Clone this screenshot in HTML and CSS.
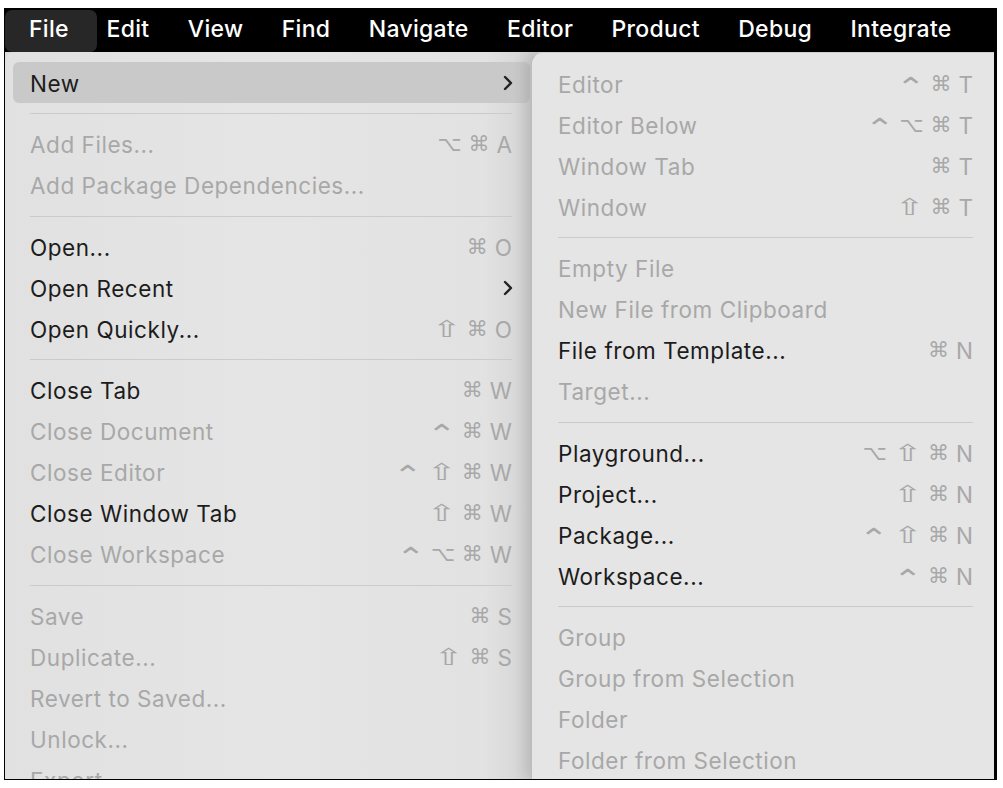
FILE: index.html
```html
<!DOCTYPE html>
<html lang="en">
<head>
<meta charset="utf-8">
<title>Xcode File menu</title>
<link rel="stylesheet" href="styles.css">
</head>
<body>
<div class="screen">
  <header class="menubar">
    <span class="mb-item active">File</span>
    <span class="mb-item">Edit</span>
    <span class="mb-item">View</span>
    <span class="mb-item">Find</span>
    <span class="mb-item">Navigate</span>
    <span class="mb-item">Editor</span>
    <span class="mb-item">Product</span>
    <span class="mb-item">Debug</span>
    <span class="mb-item">Integrate</span>
  </header>
  <div class="desk">
    <div class="menu main">
      <div class="item hl"><span class="label">New</span><svg class="chev" viewBox="0 0 10 16" width="10" height="16"><path d="M2 2 L8 8 L2 14" fill="none" stroke="currentColor" stroke-width="2.4" stroke-linecap="round" stroke-linejoin="round"/></svg></div>
      <div class="sep"></div>
      <div class="item dis"><span class="label">Add Files...</span><span class="kbd"><span class="m opt">⌥</span><span class="m">⌘</span><span class="k">A</span></span></div>
      <div class="item dis"><span class="label">Add Package Dependencies...</span></div>
      <div class="sep"></div>
      <div class="item"><span class="label">Open...</span><span class="kbd"><span class="m">⌘</span><span class="k">O</span></span></div>
      <div class="item"><span class="label">Open Recent</span><svg class="chev" viewBox="0 0 10 16" width="10" height="16"><path d="M2 2 L8 8 L2 14" fill="none" stroke="currentColor" stroke-width="2.4" stroke-linecap="round" stroke-linejoin="round"/></svg></div>
      <div class="item"><span class="label">Open Quickly...</span><span class="kbd"><span class="m sh">⇧</span><span class="m">⌘</span><span class="k">O</span></span></div>
      <div class="sep"></div>
      <div class="item"><span class="label">Close Tab</span><span class="kbd"><span class="m">⌘</span><span class="k">W</span></span></div>
      <div class="item dis"><span class="label">Close Document</span><span class="kbd"><span class="m ctl">⌃</span><span class="m">⌘</span><span class="k">W</span></span></div>
      <div class="item dis"><span class="label">Close Editor</span><span class="kbd"><span class="m ctl">⌃</span><span class="m sh">⇧</span><span class="m">⌘</span><span class="k">W</span></span></div>
      <div class="item"><span class="label">Close Window Tab</span><span class="kbd"><span class="m sh">⇧</span><span class="m">⌘</span><span class="k">W</span></span></div>
      <div class="item dis"><span class="label">Close Workspace</span><span class="kbd"><span class="m ctl">⌃</span><span class="m opt">⌥</span><span class="m">⌘</span><span class="k">W</span></span></div>
      <div class="sep"></div>
      <div class="item dis"><span class="label">Save</span><span class="kbd"><span class="m">⌘</span><span class="k">S</span></span></div>
      <div class="item dis"><span class="label">Duplicate...</span><span class="kbd"><span class="m sh">⇧</span><span class="m">⌘</span><span class="k">S</span></span></div>
      <div class="item dis"><span class="label">Revert to Saved...</span></div>
      <div class="item dis"><span class="label">Unlock...</span></div>
      <div class="item dis"><span class="label">Export...</span></div>
    </div>
    <div class="menu sub">
      <div class="item dis"><span class="label">Editor</span><span class="kbd"><span class="m ctl">⌃</span><span class="m">⌘</span><span class="k">T</span></span></div>
      <div class="item dis"><span class="label">Editor Below</span><span class="kbd"><span class="m ctl">⌃</span><span class="m opt">⌥</span><span class="m">⌘</span><span class="k">T</span></span></div>
      <div class="item dis"><span class="label">Window Tab</span><span class="kbd"><span class="m">⌘</span><span class="k">T</span></span></div>
      <div class="item dis"><span class="label">Window</span><span class="kbd"><span class="m sh">⇧</span><span class="m">⌘</span><span class="k">T</span></span></div>
      <div class="sep"></div>
      <div class="item dis"><span class="label">Empty File</span></div>
      <div class="item dis"><span class="label">New File from Clipboard</span></div>
      <div class="item"><span class="label">File from Template...</span><span class="kbd"><span class="m">⌘</span><span class="k">N</span></span></div>
      <div class="item dis"><span class="label">Target...</span></div>
      <div class="sep"></div>
      <div class="item"><span class="label">Playground...</span><span class="kbd"><span class="m opt">⌥</span><span class="m sh">⇧</span><span class="m">⌘</span><span class="k">N</span></span></div>
      <div class="item"><span class="label">Project...</span><span class="kbd"><span class="m sh">⇧</span><span class="m">⌘</span><span class="k">N</span></span></div>
      <div class="item"><span class="label">Package...</span><span class="kbd"><span class="m ctl">⌃</span><span class="m sh">⇧</span><span class="m">⌘</span><span class="k">N</span></span></div>
      <div class="item"><span class="label">Workspace...</span><span class="kbd"><span class="m ctl">⌃</span><span class="m">⌘</span><span class="k">N</span></span></div>
      <div class="sep"></div>
      <div class="item dis"><span class="label">Group</span></div>
      <div class="item dis"><span class="label">Group from Selection</span></div>
      <div class="item dis"><span class="label">Folder</span></div>
      <div class="item dis"><span class="label">Folder from Selection</span></div>
    </div>
  </div>
</div>
</body>
</html>
```
FILE: styles.css
```css
html, body {
  margin: 0;
  padding: 0;
  background: #ffffff;
}

body {
  font-family: "Inter", "DejaVu Sans", sans-serif;
}

.screen {
  margin: 8px 0 0 4px;
  width: 993px;
  height: 772px;
  box-sizing: border-box;
  border-left: 1px solid #000;
  border-right: 3px solid #000;
  border-bottom: 1px solid #000;
  background: #000;
  display: flex;
  flex-direction: column;
  overflow: hidden;
}

.menubar {
  height: 44px;
  flex: none;
  display: flex;
  align-items: stretch;
  padding-top: 2px;
  box-sizing: border-box;
  background: #000;
  color: #fff;
  font-size: 23px;
  font-weight: 500;
  letter-spacing: 0.3px;
}

.mb-item {
  display: flex;
  align-items: center;
  padding: 0 19.2px 5px;
  border-radius: 7px;
}

.mb-item.active {
  background: #272727;
  padding-left: 24px;
  padding-right: 28px;
  margin-right: -9.5px;
}

.desk {
  flex: 1;
  display: flex;
  background: #dadada;
  overflow: hidden;
}

.menu {
  font-size: 22.5px;
  letter-spacing: 0.55px;
  color: #1c1c1c;
  box-sizing: border-box;
}

.main {
  width: 533px;
  flex: none;
  padding: 10px 8px 0;
  background: linear-gradient(90deg, #e1e1e1 0%, #e5e5e5 50%, #e2e2e2 90%, #d2d2d2 100%);
  border-top-left-radius: 10px;
}

.sub {
  flex: 1;
  margin-left: -7px;
  position: relative;
  padding: 10px 0 0;
  background: #e5e5e5;
  border-left: 1px solid #bdbdbd;
  border-top: 1px solid #d0d0d0;
  border-top-left-radius: 12px;
  box-shadow: -6px 0 14px rgba(0, 0, 0, 0.13);
}

.item {
  height: 41px;
  display: flex;
  align-items: center;
  justify-content: space-between;
  padding: 1px 18px 0 17px;
  box-sizing: border-box;
  border-radius: 6px;
  white-space: nowrap;
}

.sub .item {
  padding: 1px 21px 0 26px;
}

.item.hl {
  background: #c9c9c9;
}

.item.dis {
  color: #a8a8a8;
}

.kbd {
  display: flex;
  align-items: center;
  gap: 7px;
  color: #a8a8a8;
  letter-spacing: 0;
}

.kbd .m {
  display: inline-block;
  font-family: "DejaVu Sans", sans-serif;
  font-size: 21px;
  line-height: 1;
}

.kbd .m.sh {
  font-size: 23px;
  transform: scaleX(1.55);
  margin: 0 4px;
}

.kbd .m.ctl {
  transform: translateY(3px) scale(1.7, 1.25);
  margin: 0 4px;
}

.kbd .k {
  font-size: 22.5px;
}

.chev {
  color: #222;
  margin-right: -1px;
}

.sep {
  height: 1px;
  margin: 10px 18px 9.5px 17px;
  background: #cbcbcb;
}

.sub .sep {
  margin: 10px 21px 9.5px 26px;
}
```
